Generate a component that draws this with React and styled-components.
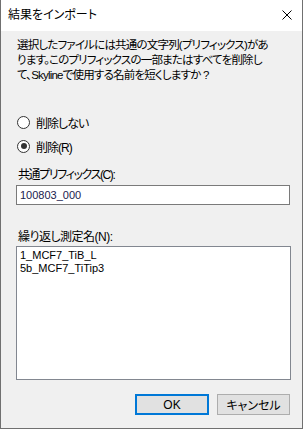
import React from 'react'
import styled, { createGlobalStyle } from "styled-components";

const GlobalStyle = createGlobalStyle`
  html, body {
    margin: 0;
    padding: 0;
    background: #ffffff;
  }
  body {
    font-family: "Liberation Sans", "Noto Sans CJK JP", sans-serif;
    font-feature-settings: "palt";
    font-size: 12px;
    color: #000;
  }
`;

function CloseIcon() {
  return (
    <svg width="10" height="10" viewBox="0 0 10 10">
      <path d="M0.5 0.5 L9.5 9.5 M9.5 0.5 L0.5 9.5" stroke="#000" strokeWidth="1" fill="none" />
    </svg>
  )
}

function Radio({ checked, children }) {
  return (
    <StyledRadioRow>
      <StyledRadioCircle>{checked && <div></div>}</StyledRadioCircle>
      <span>{children}</span>
    </StyledRadioRow>
  )
}

export default function App() {
  return (
    <>
      <GlobalStyle />
      <StyledWindow>
        <StyledTitleBar>
          <StyledTitle>結果をインポート</StyledTitle>
          <StyledClose><CloseIcon /></StyledClose>
        </StyledTitleBar>
        <StyledBody>
          <StyledMessage>
            選択したファイルには共通の文字列(プリフィックス)があ<br />
            ります。このプリフィックスの一部またはすべてを削除し<br />
            て、Skylineで使用する名前を短くしますか ?
          </StyledMessage>
          <StyledRadioGroup>
            <Radio>削除しない</Radio>
            <Radio checked>削除(R)</Radio>
          </StyledRadioGroup>
          <StyledLabel $spacing="-1.4px">共通プリフィックス(C):</StyledLabel>
          <StyledTextBox>100803_000</StyledTextBox>
          <StyledLabel $top="25px" $spacing="-0.5px">繰り返し測定名(N):</StyledLabel>
          <StyledList>
            <div>1_MCF7_TiB_L</div>
            <div>5b_MCF7_TiTip3</div>
          </StyledList>
          <StyledButtons>
            <StyledButton $primary>OK</StyledButton>
            <StyledButton>キャンセル</StyledButton>
          </StyledButtons>
        </StyledBody>
      </StyledWindow>
    </>
  )
}

const StyledWindow = styled.div`
  width: 303px;
  height: 429px;
  box-sizing: border-box;
  border: 1px solid #707070;
  border-top: none;
  display: flex;
  flex-direction: column;
  background: #f0f0f0;
`;

const StyledTitleBar = styled.div`
  height: 31px;
  flex-shrink: 0;
  background: #ffffff;
  display: flex;
  align-items: center;
  justify-content: space-between;
  padding: 0 10px 0 7px;
`;

const StyledTitle = styled.div`
  font-size: 12px;
  line-height: 15px;
  padding-bottom: 1px;
`;

const StyledClose = styled.div`
  width: 10px;
  height: 10px;
  display: flex;
  margin-bottom: 2px;
`;

const StyledBody = styled.div`
  flex: 1;
  display: flex;
  flex-direction: column;
  padding: 7px 12px 0 15px;
`;

const StyledMessage = styled.div`
  font-size: 11.5px;
  line-height: 15px;
  white-space: nowrap;
  padding-left: 1px;
  letter-spacing: -0.8px;
`;

const StyledRadioGroup = styled.div`
  display: flex;
  flex-direction: column;
  gap: 8px;
  margin-top: 31px;
`;

const StyledRadioRow = styled.div`
  display: flex;
  align-items: center;
  gap: 6px;
  height: 16px;
  padding-left: 1px;
  letter-spacing: -1px;
`;

const StyledRadioCircle = styled.div`
  width: 11px;
  height: 11px;
  border: 1px solid #333333;
  border-radius: 50%;
  background: #ffffff;
  display: flex;
  align-items: center;
  justify-content: center;
  div {
    width: 6px;
    height: 6px;
    border-radius: 50%;
    background: #333333;
  }
`;

const StyledLabel = styled.div`
  line-height: 15px;
  margin-top: ${(p) => p.$top || "14px"};
  padding-left: 2px;
  white-space: nowrap;
  letter-spacing: ${(p) => p.$spacing || "0"};
`;

const StyledTextBox = styled.div`
  margin-top: 2px;
  width: 274px;
  height: 20px;
  box-sizing: border-box;
  border: 1px solid #7a7a7a;
  background: #ffffff;
  padding: 0 3px;
  display: flex;
  align-items: center;
  font-size: 11px;
  color: #1a1a4e;
`;

const StyledList = styled.div`
  margin-top: 1px;
  width: 275px;
  height: 134px;
  box-sizing: border-box;
  border: 1px solid #828790;
  background: #ffffff;
  padding: 2px 3px;
  font-size: 11px;
  line-height: 13px;
`;

const StyledButtons = styled.div`
  display: flex;
  justify-content: flex-end;
  gap: 8px;
  margin-top: 14px;
  width: 274px;
`;

const StyledButton = styled.div`
  width: ${(p) => (p.$primary ? "74px" : "73px")};
  height: 21px;
  box-sizing: border-box;
  background: #e1e1e1;
  border: ${(p) => (p.$primary ? "2px solid #0078d7" : "1px solid #adadad")};
  display: flex;
  align-items: center;
  justify-content: center;
  font-size: 12px;
`;
